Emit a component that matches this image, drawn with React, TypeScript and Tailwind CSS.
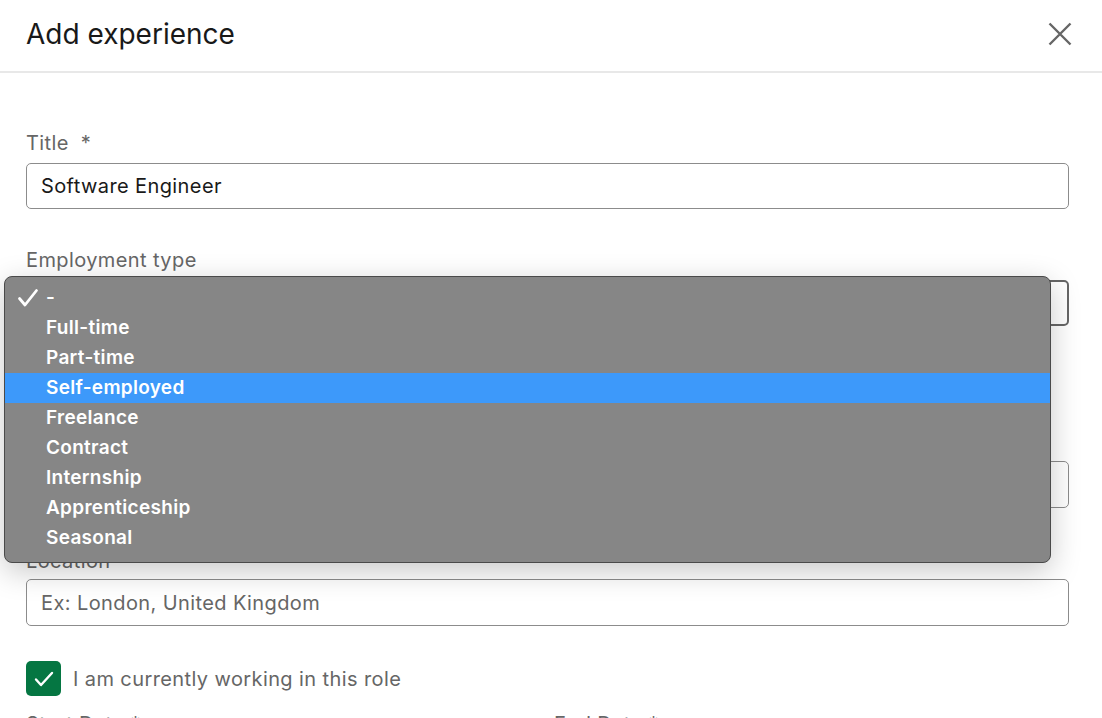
const options = [
  "-",
  "Full-time",
  "Part-time",
  "Self-employed",
  "Freelance",
  "Contract",
  "Internship",
  "Apprenticeship",
  "Seasonal",
];

function Label({ children }: { children: React.ReactNode }) {
  return <div className="text-[20px] leading-6 tracking-[0.4px] text-[#666666]">{children}</div>;
}

export default function App() {
  return (
    <div
      className="relative h-[718px] w-full overflow-hidden bg-white text-[#191919]"
      style={{ fontFamily: "Inter, 'Noto Sans', sans-serif" }}
    >
      {/* Header */}
      <div className="flex h-[73px] items-center justify-between border-b-2 border-[#e8e8e8] pl-[26px] pr-[30px]">
        <h1 className="-mt-1 text-[28px] font-normal leading-8 text-[#191919]">Add experience</h1>
        <button className="-mt-1 text-[#666666]">
          <svg width="24" height="24" viewBox="0 0 24 24" fill="none" stroke="currentColor" strokeWidth="2.4" strokeLinecap="butt">
            <path d="M1.5 1.5l21 21M22.5 1.5l-21 21" />
          </svg>
        </button>
      </div>

      {/* Form */}
      <div className="pl-[26px] pr-[33px] pt-[58px]">
        <Label>Title&nbsp; *</Label>
        <div className="mt-2 flex h-[46px] items-center rounded-[5px] border border-[#8c8c8c] px-[14px] text-[20px] tracking-[0.4px]">
          Software Engineer
        </div>

        <div className="mt-[39px]">
          <Label>Employment type</Label>
        </div>
        <div className="mt-2 flex h-[46px] items-center rounded-[5px] border-2 border-[#666666] px-[14px] text-[20px]">
          -
        </div>
        <div className="mt-2 text-[16px] text-[#666666]">Learn more about employment types.</div>

        <div className="mt-[71px]">
          <Label>Company name *</Label>
        </div>
        <div className="mt-2 flex h-[47px] items-center rounded-[5px] border border-[#8c8c8c] px-[14px] text-[20px] tracking-[0.4px]">
          Acme Inc.
        </div>

        <div className="mt-[41px]">
          <Label>Location</Label>
        </div>
        <div className="mt-[6px] flex h-[47px] items-center rounded-[5px] border border-[#8c8c8c] px-[14px] text-[20px] tracking-[0.4px] text-[#666666]">
          Ex: London, United Kingdom
        </div>

        <div className="mt-[35px] flex items-center gap-3">
          <div className="flex h-[35px] w-[35px] items-center justify-center rounded-[5px] bg-[#057642]">
            <svg width="24" height="24" viewBox="0 0 24 24" fill="none" stroke="white" strokeWidth="2.4" strokeLinecap="round" strokeLinejoin="round">
              <path d="M4 12.5l5 5.5L20 6" />
            </svg>
          </div>
          <span className="text-[20px] tracking-[0.4px] text-[#666666]">I am currently working in this role</span>
        </div>

        <div className="mt-[16px] grid grid-cols-2 gap-[13px]">
          <Label>Start Date *</Label>
          <Label>End Date *</Label>
        </div>
      </div>

      {/* Native select menu */}
      <div className="absolute left-[4px] top-[276px] w-[1047px] rounded-[8px] border border-[#4a4a4a] bg-[#868686] pb-[9px] pt-[6px] shadow-[0_8px_30px_rgba(0,0,0,0.22)]">
        {options.map((opt, i) => (
          <div
            key={opt}
            className={`relative flex h-[30px] items-center pl-[41px] text-[19px] font-semibold tracking-[0.3px] text-white ${
              i === 3 ? "bg-[#3d99fa]" : ""
            }`}
          >
            {i === 0 && (
              <svg className="absolute left-[12px] top-[5px]" width="22" height="20" viewBox="0 0 22 20" fill="none" stroke="white" strokeWidth="2.8" strokeLinecap="round" strokeLinejoin="round">
                <path d="M2.5 10.5l5.5 6.5L19.5 2.5" />
              </svg>
            )}
            {opt}
          </div>
        ))}
      </div>
    </div>
  );
}
